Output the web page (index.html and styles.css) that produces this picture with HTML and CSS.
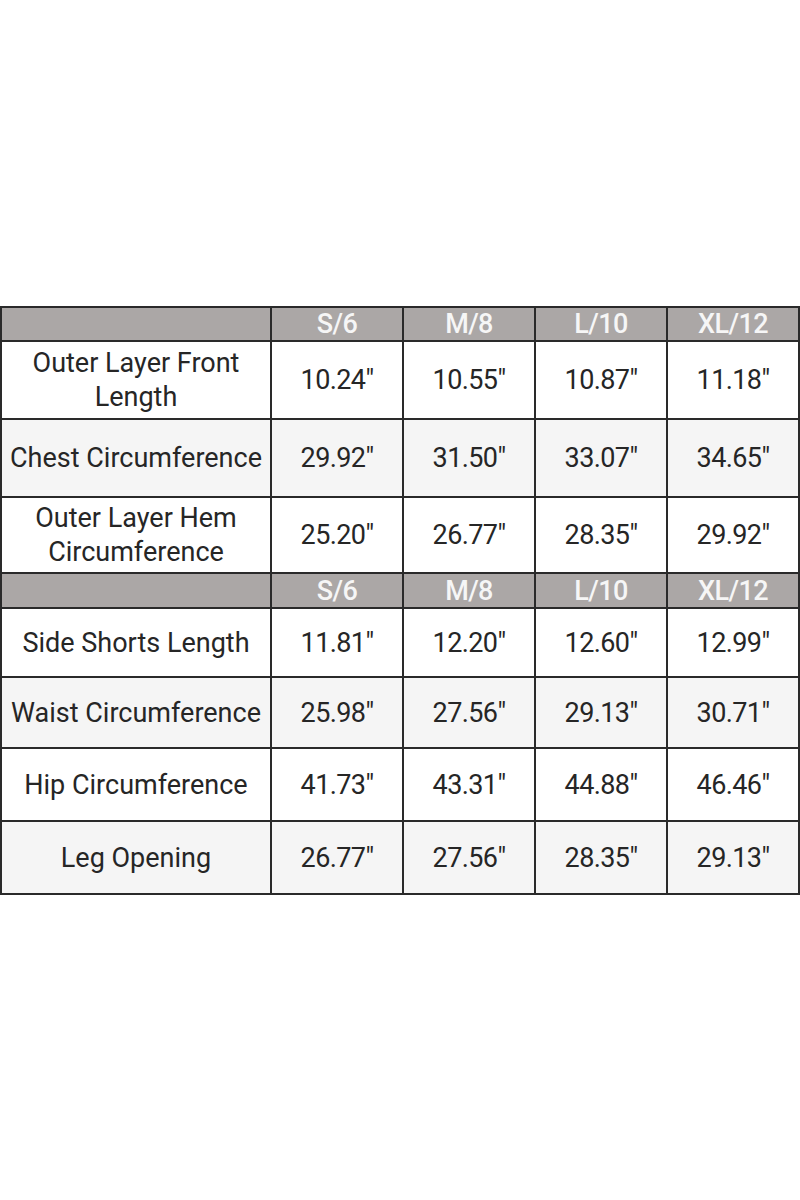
FILE: index.html
```html
<!DOCTYPE html>
<html>
<head>
<meta charset="utf-8">
<link rel="stylesheet" href="styles.css">
</head>
<body>
<div class="page">
<table class="size-chart">
  <colgroup>
    <col class="c-label"><col class="c-size"><col class="c-size"><col class="c-size"><col class="c-size">
  </colgroup>
  <tr class="head h1"><td></td><td>S/6</td><td>M/8</td><td>L/10</td><td>XL/12</td></tr>
  <tr class="r-a white"><td class="label">Outer Layer Front Length</td><td>10.24"</td><td>10.55"</td><td>10.87"</td><td>11.18"</td></tr>
  <tr class="r-b grey"><td class="label">Chest Circumference</td><td>29.92"</td><td>31.50"</td><td>33.07"</td><td>34.65"</td></tr>
  <tr class="r-c white"><td class="label">Outer Layer Hem Circumference</td><td>25.20"</td><td>26.77"</td><td>28.35"</td><td>29.92"</td></tr>
  <tr class="head h2"><td></td><td>S/6</td><td>M/8</td><td>L/10</td><td>XL/12</td></tr>
  <tr class="r-d white"><td class="label">Side Shorts Length</td><td>11.81"</td><td>12.20"</td><td>12.60"</td><td>12.99"</td></tr>
  <tr class="r-e grey"><td class="label">Waist Circumference</td><td>25.98"</td><td>27.56"</td><td>29.13"</td><td>30.71"</td></tr>
  <tr class="r-f white"><td class="label">Hip Circumference</td><td>41.73"</td><td>43.31"</td><td>44.88"</td><td>46.46"</td></tr>
  <tr class="r-g grey"><td class="label">Leg Opening</td><td>26.77"</td><td>27.56"</td><td>28.35"</td><td>29.13"</td></tr>
</table>
</div>
</body>
</html>
```
FILE: styles.css
```css
html, body {
  margin: 0;
  padding: 0;
  background: #ffffff;
}
.page {
  width: 800px;
  height: 1200px;
  padding-top: 306px;
  box-sizing: border-box;
}
.size-chart {
  border-collapse: collapse;
  table-layout: fixed;
  width: 798px;
  font-family: Roboto, "Liberation Sans", sans-serif;
  font-size: 27px;
  color: #262626;
  letter-spacing: -0.6px;
}
.c-label { width: 270px; }
.c-size { width: 132px; }
.size-chart td {
  border: 2px solid #2a2a2a;
  text-align: center;
  vertical-align: middle;
  padding: 0 4px;
  line-height: 34px;
}
.size-chart .label {
  padding: 0 2px;
  letter-spacing: 0;
}
.head td {
  background: #aba7a6;
  color: #f6f6f6;
  font-weight: 500;
  line-height: 30px;
}
.white td { background: #ffffff; }
.grey td { background: #f5f5f5; }
.h1 { height: 34px; }
.r-a { height: 78px; }
.r-b { height: 78px; }
.r-c { height: 76px; }
.h2 { height: 35px; }
.r-d { height: 69px; }
.r-e { height: 71px; }
.r-f { height: 73px; }
.r-g { height: 73px; }
```
